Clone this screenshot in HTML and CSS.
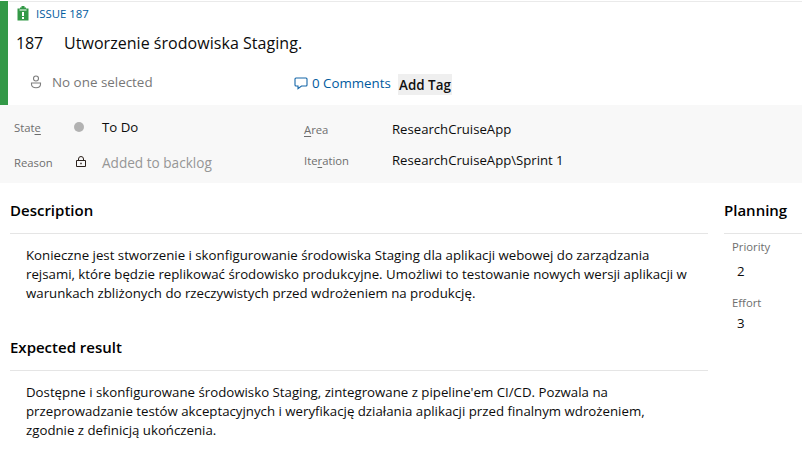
FILE: index.html
```html
<!DOCTYPE html>
<html lang="pl">
<head>
<meta charset="utf-8">
<title>Issue 187</title>
<link rel="stylesheet" href="styles.css">
</head>
<body>
<header class="header">
  <div class="type-row">
    <svg class="type-icon" width="12" height="15" viewBox="0 0 12 15"><path fill="#339947" fill-rule="evenodd" d="M0.5 2.5H3V1.5H4.5V0H7.500V1.500H9V2.500H11.500V14.500H.5ZM2.500 3.500V4.500H9.500V3.500ZM5 6V10H7V6ZM5 11V13H7V11Z"/></svg>
    <a class="type-link">ISSUE 187</a>
  </div>
  <div class="title-row"><span class="id">187</span><span class="title">Utworzenie środowiska Staging.</span></div>
  <div class="actions">
    <div class="assignee">
      <svg width="12" height="14" viewBox="0 0 12 14" fill="none" stroke="#7d7d7d" stroke-width="1.1"><circle cx="6" cy="3.500" r="2.500"/><path d="M1.500 8H10.500V9.300C10.500 11.500 8.700 12.700 6 12.700S1.500 11.500 1.500 9.300Z"/></svg>
      <span class="nobody">No one selected</span>
    </div>
    <a class="comments">
      <svg width="14" height="13" viewBox="0 0 14 13" fill="none" stroke="#1566a8" stroke-width="1.1"><path d="M2 1H12Q13 1 13 2V8Q13 9 12 9H7.500L4 11.700V9H2Q1 9 1 8V2Q1 1 2 1Z"/></svg>
      <span class="count">0 Comments</span>
    </a>
    <button class="add-tag">Add Tag</button>
  </div>
</header>
<section class="fields">
  <div class="field state"><span class="label">Stat<u>e</u></span><span class="mark"><i class="dot"></i></span><span>To Do</span></div>
  <div class="field area"><span class="label"><u>A</u>rea</span><span class="path">ResearchCruiseApp</span></div>
  <div class="field reason"><span class="label">Reason</span><span class="mark"><svg class="lock" width="10" height="12" viewBox="0 0 10 12" fill="none" stroke="#2b211c"><path d="M.5 4.500H9.500V10.500H.5ZM2.500 4.500V3Q2.500 .5 5 .5T7.500 3V4.500"/><path fill="#2b211c" stroke="none" d="M4.300 6.800H5.700V8.200H4.300Z"/></svg></span><span class="muted">Added to backlog</span></div>
  <div class="field iteration"><span class="label">Ite<u>r</u>ation</span><span class="path">ResearchCruiseApp\Sprint 1</span></div>
</section>
<main class="content">
  <div class="main-column">
    <section class="group">
      <h2>Description</h2>
      <p>Konieczne jest stworzenie i skonfigurowanie środowiska Staging dla aplikacji webowej do zarządzania<br>rejsami, które będzie replikować środowisko produkcyjne. Umożliwi to testowanie nowych wersji aplikacji w<br>warunkach zbliżonych do rzeczywistych przed wdrożeniem na produkcję.</p>
    </section>
    <section class="group">
      <h2>Expected result</h2>
      <p>Dostępne i skonfigurowane środowisko Staging, zintegrowane z pipeline'em CI/CD. Pozwala na<br>przeprowadzanie testów akceptacyjnych i weryfikację działania aplikacji przed finalnym wdrożeniem,<br>zgodnie z definicją ukończenia.</p>
    </section>
  </div>
  <aside class="planning">
    <h2>Planning</h2>
    <dl>
      <dt>Priority</dt><dd class="priority">2</dd>
      <dt>Effort</dt><dd>3</dd>
    </dl>
  </aside>
</main>
</body>
</html>
```
FILE: styles.css
```css
* { box-sizing: border-box; }
body {
  margin: 0;
  height: 449px;
  overflow: hidden;
  background: #fff;
  color: #0c0c0c;
  font: 13.25px/19px "Open Sans", "Noto Sans", sans-serif;
  white-space: nowrap;
}
h2, p, dl, dd { margin: 0; }
svg { display: block; flex: none; }
.header {
  height: 104px;
  margin-top: 1px;
  border-left: 8px solid #339947;
  box-shadow: inset 0 1px #eaeaea;
}
.type-row { display: flex; align-items: center; height: 25px; padding-left: 9px; }
.type-link { margin-left: 7px; font-size: 11.4px; color: #005a9e; }
.title-row { display: flex; height: 34px; padding-left: 8px; font-size: 16px; line-height: 34px; }
.id { width: 48px; letter-spacing: -.2px; }
.title { letter-spacing: .04px; }
.actions { display: flex; height: 44px; padding-left: 22px; }
.assignee { display: flex; align-items: center; width: 264px; height: 44px; color: #777; }
.nobody { margin-left: 10px; font-size: 13.4px; }
.comments { display: flex; align-items: center; width: 104px; height: 46px; color: #005a9e; }
.count { margin-left: 4px; font-size: 13.3px; }
.add-tag {
  align-self: flex-start;
  width: 54px;
  height: 21px;
  margin-top: 14px;
  padding: 1px 0 0;
  border: 0;
  background: #efefef;
  color: #111;
  font: 600 13.4px/20px "Open Sans", sans-serif;
}
.fields {
  display: grid;
  grid-template-columns: 290px 1fr;
  grid-template-rows: 35px 34px;
  height: 78px;
  padding: 5px 14px;
  background: #f8f8f8;
}
.field { display: flex; align-items: center; }
.field u { text-underline-offset: 2px; text-decoration-thickness: 1px; }
.label { width: 60px; font-size: 11.3px; color: #6e6e6e; }
.reason .label { padding-top: 1px; }
.area .label, .iteration .label { width: 88px; }
.area { padding-top: 3px; }
.iteration { padding-bottom: 3px; }
.path { font-size: 13.15px; }
.mark { display: flex; width: 28px; }
.state .mark { padding-bottom: 1px; }
.dot { width: 10px; height: 10px; border-radius: 50%; background: #b2b2b2; }
.lock { margin-left: 2px; }
.muted { color: #969696; font-size: 13.6px; }
.content { display: flex; gap: 16px; padding: 0 0 0 10px; }
.main-column { width: 698px; }
.group { height: 137px; }
h2 {
  height: 51px;
  padding-top: 17px;
  border-bottom: 1px solid #e5e5e5;
  color: #000;
  font-size: 15px;
  font-weight: 600;
  line-height: 20px;
}
.group p { padding: 12px 0 0 16px; }
.planning { flex: 1; }
.planning dl { padding: 3px 8px; }
dt { font-size: 11.3px; line-height: 19px; color: #6e6e6e; }
dd { padding-left: 5px; height: 21px; line-height: 22px; }
.priority { height: 37px; line-height: 31px; }
```
